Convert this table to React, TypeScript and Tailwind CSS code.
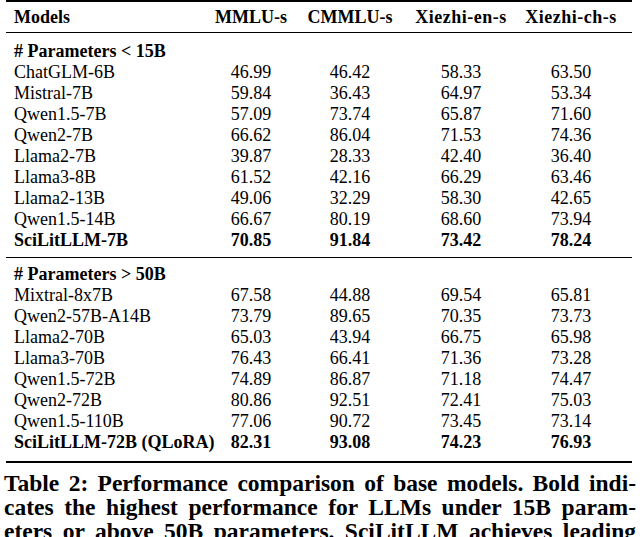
const small = [
  ["ChatGLM-6B", "46.99", "46.42", "58.33", "63.50"],
  ["Mistral-7B", "59.84", "36.43", "64.97", "53.34"],
  ["Qwen1.5-7B", "57.09", "73.74", "65.87", "71.60"],
  ["Qwen2-7B", "66.62", "86.04", "71.53", "74.36"],
  ["Llama2-7B", "39.87", "28.33", "42.40", "36.40"],
  ["Llama3-8B", "61.52", "42.16", "66.29", "63.46"],
  ["Llama2-13B", "49.06", "32.29", "58.30", "42.65"],
  ["Qwen1.5-14B", "66.67", "80.19", "68.60", "73.94"],
]

const large = [
  ["Mixtral-8x7B", "67.58", "44.88", "69.54", "65.81"],
  ["Qwen2-57B-A14B", "73.79", "89.65", "70.35", "73.73"],
  ["Llama2-70B", "65.03", "43.94", "66.75", "65.98"],
  ["Llama3-70B", "76.43", "66.41", "71.36", "73.28"],
  ["Qwen1.5-72B", "74.89", "86.87", "71.18", "74.47"],
  ["Qwen2-72B", "80.86", "92.51", "72.41", "75.03"],
  ["Qwen1.5-110B", "77.06", "90.72", "73.45", "73.14"],
]

const grid = "grid grid-cols-[188px_98px_100px_122px_98px]"

const Row = ({ cells, bold = false }: { cells: string[]; bold?: boolean }) => (
  <div className={`${grid} h-[21px] leading-[21px] ${bold ? "font-bold" : ""}`}>
    <div className="whitespace-nowrap">{cells[0]}</div>
    {cells.slice(1).map((c, i) => (
      <div key={i} className="text-center">{c}</div>
    ))}
  </div>
)

export default function App() {
  return (
    <div className="w-[640px] h-[537px] overflow-hidden bg-white text-black font-['Liberation_Serif',serif]">
      <div className="ml-[6px] w-[626px] border-t-2 border-black">
        <div className={`${grid} pl-[8px] h-[31px] items-center font-bold text-[18px] border-b border-black`}>
          <div>Models</div>
          <div className="text-center">MMLU-s</div>
          <div className="text-center">CMMLU-s</div>
          <div className="text-center tracking-[0.5px]">Xiezhi-en-s</div>
          <div className="text-center tracking-[0.5px]">Xiezhi-ch-s</div>
        </div>
        <div className="pl-[8px] pt-[8px] pb-[6px] text-[18px] border-b border-black">
          <div className="h-[21px] leading-[21px] font-bold"># Parameters &lt; 15B</div>
          {small.map((r) => (
            <Row key={r[0]} cells={r} />
          ))}
          <Row cells={["SciLitLLM-7B", "70.85", "91.84", "73.42", "78.24"]} bold />
        </div>
        <div className="pl-[8px] pt-[6px] pb-[8px] text-[18px] border-b-2 border-black">
          <div className="h-[21px] leading-[21px] font-bold"># Parameters &gt; 50B</div>
          {large.map((r) => (
            <Row key={r[0]} cells={r} />
          ))}
          <Row cells={["SciLitLLM-72B (QLoRA)", "82.31", "93.08", "74.23", "76.93"]} bold />
        </div>
      </div>
      <div className="px-[4px] pt-[8px] font-bold text-[23.5px] leading-[24px]">
        <div className="text-justify [text-align-last:justify] whitespace-nowrap">Table 2: Performance comparison of base models. Bold indi-</div>
        <div className="text-justify [text-align-last:justify] whitespace-nowrap">cates the highest performance for LLMs under 15B param-</div>
        <div className="text-justify [text-align-last:justify] whitespace-nowrap">eters or above 50B parameters. SciLitLLM achieves leading</div>
      </div>
    </div>
  )
}
